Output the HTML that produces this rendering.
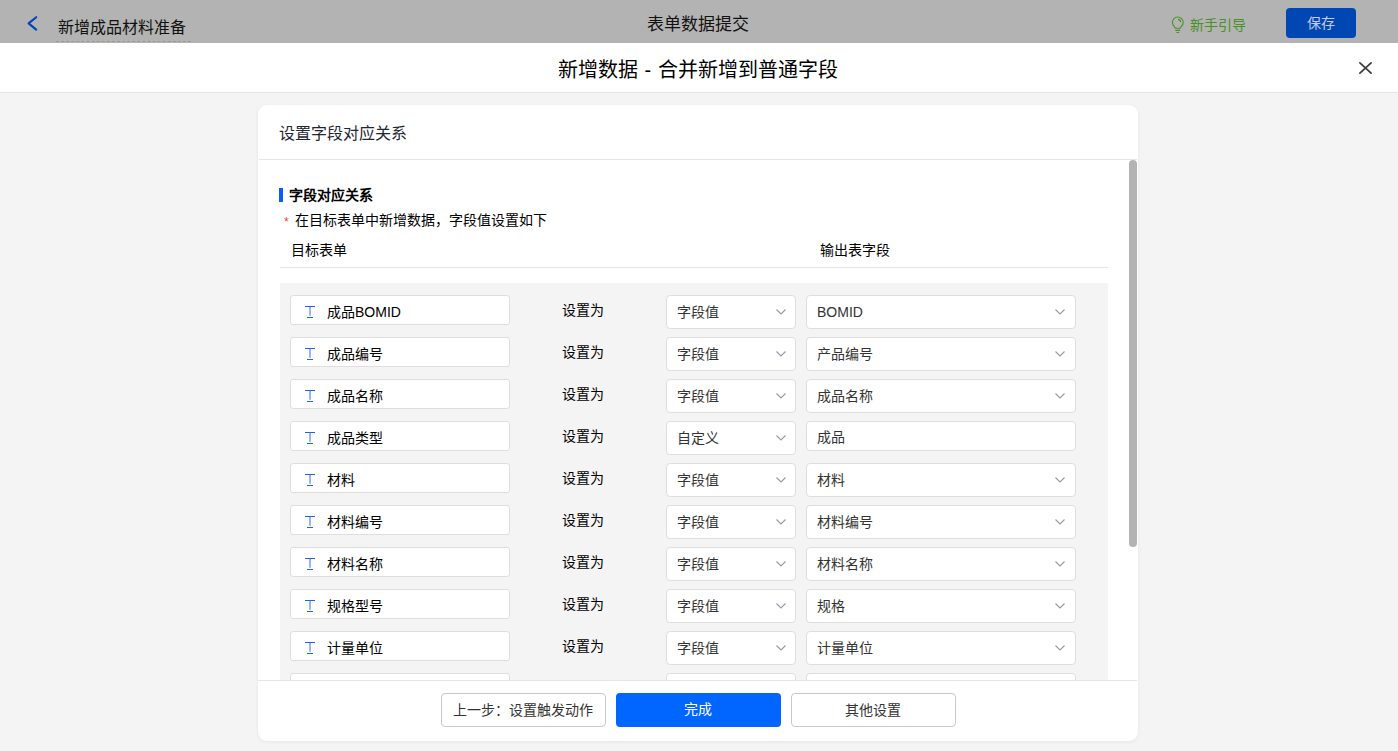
<!DOCTYPE html>
<html lang="zh-CN"><head><meta charset="utf-8">
<style>
*{margin:0;padding:0;box-sizing:border-box}
html,body{width:1398px;height:751px;overflow:hidden}
body{font-family:"Liberation Sans",sans-serif;background:#f4f4f4;position:relative;color:#333}
.abs{position:absolute;white-space:nowrap}
#top{position:absolute;left:0;top:0;width:1398px;height:43px;background:#b3b3b3}
#mhead{position:absolute;left:0;top:43px;width:1398px;height:50px;background:#fff;border-bottom:1px solid #e3e3e3}
#card{position:absolute;left:258px;top:105px;width:880px;height:636px;background:#fff;border-radius:9px;overflow:hidden;box-shadow:0 1px 4px rgba(0,0,0,.06)}
.fbox{position:absolute;left:290px;width:220px;height:30px;background:#fff;border:1px solid #dedede;border-radius:3px}
.sel{position:absolute;height:34px;background:#fff;border:1px solid #dedede;border-radius:4px}
.txt14{font-size:14px;line-height:16px}
.chev{position:absolute;width:10px;height:6px}
.btn{position:absolute;top:693px;height:34px;border-radius:4px;font-size:14px;text-align:center;line-height:32px;padding-right:2px}
</style></head>
<body>
<div id="top"></div>
<svg class="abs" style="left:26px;top:15px" width="14" height="18" viewBox="0 0 14 18"><path d="M10.2 2.2L2.6 8.4L10.2 14.6" fill="none" stroke="#0044b8" stroke-width="2.1" stroke-linecap="round" stroke-linejoin="round"/></svg>
<div class="abs" style="left:58px;top:18px;font-size:16px;line-height:20px;color:#111">新增成品材料准备</div>
<div class="abs" style="left:56px;top:41px;width:135px;border-top:1px dashed #9a9a9a"></div>
<div class="abs" style="left:647px;top:15px;font-size:17px;line-height:20px;color:#111">表单数据提交</div>
<svg class="abs" style="left:1164px;top:10px" width="28" height="28" viewBox="0 0 28 28"><path d="M11.3 18.3C11.1 16.6 8.4 15.6 8.4 12.4A5.4 5.4 0 0 1 19.2 12.4C19.2 15.6 16.5 16.6 16.3 18.3Z" fill="none" stroke="#489224" stroke-width="1.1" stroke-linejoin="round"/><path d="M14.1 9.4A3 3 0 0 1 16.7 12.1" fill="none" stroke="#489224" stroke-width="1.1"/><path d="M11.4 20.4H16.2M12.4 22.5H15.2" stroke="#489224" stroke-width="1.1"/></svg>
<div class="abs" style="left:1190px;top:17px;font-size:14px;line-height:16px;color:#489224">新手引导</div>
<div class="abs" style="left:1286px;top:8px;width:70px;height:30px;background:#0047b3;border-radius:4px;color:#c6cde0;font-size:14px;line-height:30px;text-align:center">保存</div>

<div id="mhead"></div>
<div class="abs" style="left:558px;top:58px;font-size:20px;line-height:24px;color:#000;word-spacing:1px">新增数据 - 合并新增到普通字段</div>
<svg class="abs" style="left:1358px;top:61px" width="15" height="15" viewBox="0 0 15 15"><path d="M1.9 1.8L13.1 12.2M13.1 1.8L1.9 12.2" stroke="#3a3a3a" stroke-width="1.7" stroke-linecap="round"/></svg>

<div id="card"></div>
<div class="abs" style="left:279px;top:124px;font-size:16px;line-height:20px;color:#1f2633">设置字段对应关系</div>
<div class="abs" style="left:259px;top:159px;width:878px;height:1px;background:#e6e6e6"></div>
<div class="abs" style="left:1129px;top:160px;width:8px;height:387px;background:#b3b3b3;border-radius:4px"></div>

<div class="abs" style="left:279px;top:188px;width:4px;height:14px;background:#0d5cf5"></div>
<div class="abs txt14" style="left:289px;top:187px;font-weight:bold;color:#000">字段对应关系</div>
<div class="abs" style="left:284px;top:216px;font-size:12px;line-height:12px;color:#f04040">*</div>
<div class="abs txt14" style="left:295px;top:212px;color:#000">在目标表单中新增数据，字段值设置如下</div>
<div class="abs txt14" style="left:291px;top:242px;color:#000">目标表单</div>
<div class="abs txt14" style="left:820px;top:242px;color:#000">输出表字段</div>
<div class="abs" style="left:280px;top:267px;width:828px;height:1px;background:#e6e6e6"></div>

<div id="rows" class="abs" style="left:0;top:0;width:1398px;height:680px;overflow:hidden">
<div class="abs" style="left:280px;top:283px;width:828px;height:420px;background:#f4f4f4"></div>
<div class="fbox" style="top:295px"></div>
<svg class="abs" style="left:305px;top:306px" width="11" height="13" viewBox="0 0 11 13"><path d="M0 0.5H10M2 11.5H8" fill="none" stroke="#1f63ff" stroke-width="1"/><path d="M5 1V9.8" fill="none" stroke="#4a70ff" stroke-width="1.1"/></svg>
<div class="abs txt14" style="left:327px;top:304px;color:#000">成品BOMID</div>
<div class="abs txt14" style="left:562px;top:302px;color:#000">设置为</div>
<div class="sel" style="left:666px;top:295px;width:130px"></div>
<div class="abs txt14" style="left:677px;top:304px;color:#333">字段值</div>
<svg class="chev" style="left:775.5px;top:309px" width="10" height="6" viewBox="0 0 10 6"><path d="M0.5 0.5L5 5L9.5 0.5" fill="none" stroke="#939aa6" stroke-width="1.1"/></svg>
<div class="sel" style="left:806px;top:295px;width:270px"></div>
<div class="abs txt14" style="left:817px;top:304px;color:#333">BOMID</div>
<svg class="chev" style="left:1055px;top:309px" width="10" height="6" viewBox="0 0 10 6"><path d="M0.5 0.5L5 5L9.5 0.5" fill="none" stroke="#939aa6" stroke-width="1.1"/></svg>
<div class="fbox" style="top:337px"></div>
<svg class="abs" style="left:305px;top:348px" width="11" height="13" viewBox="0 0 11 13"><path d="M0 0.5H10M2 11.5H8" fill="none" stroke="#1f63ff" stroke-width="1"/><path d="M5 1V9.8" fill="none" stroke="#4a70ff" stroke-width="1.1"/></svg>
<div class="abs txt14" style="left:327px;top:346px;color:#000">成品编号</div>
<div class="abs txt14" style="left:562px;top:344px;color:#000">设置为</div>
<div class="sel" style="left:666px;top:337px;width:130px"></div>
<div class="abs txt14" style="left:677px;top:346px;color:#333">字段值</div>
<svg class="chev" style="left:775.5px;top:351px" width="10" height="6" viewBox="0 0 10 6"><path d="M0.5 0.5L5 5L9.5 0.5" fill="none" stroke="#939aa6" stroke-width="1.1"/></svg>
<div class="sel" style="left:806px;top:337px;width:270px"></div>
<div class="abs txt14" style="left:817px;top:346px;color:#333">产品编号</div>
<svg class="chev" style="left:1055px;top:351px" width="10" height="6" viewBox="0 0 10 6"><path d="M0.5 0.5L5 5L9.5 0.5" fill="none" stroke="#939aa6" stroke-width="1.1"/></svg>
<div class="fbox" style="top:379px"></div>
<svg class="abs" style="left:305px;top:390px" width="11" height="13" viewBox="0 0 11 13"><path d="M0 0.5H10M2 11.5H8" fill="none" stroke="#1f63ff" stroke-width="1"/><path d="M5 1V9.8" fill="none" stroke="#4a70ff" stroke-width="1.1"/></svg>
<div class="abs txt14" style="left:327px;top:388px;color:#000">成品名称</div>
<div class="abs txt14" style="left:562px;top:386px;color:#000">设置为</div>
<div class="sel" style="left:666px;top:379px;width:130px"></div>
<div class="abs txt14" style="left:677px;top:388px;color:#333">字段值</div>
<svg class="chev" style="left:775.5px;top:393px" width="10" height="6" viewBox="0 0 10 6"><path d="M0.5 0.5L5 5L9.5 0.5" fill="none" stroke="#939aa6" stroke-width="1.1"/></svg>
<div class="sel" style="left:806px;top:379px;width:270px"></div>
<div class="abs txt14" style="left:817px;top:388px;color:#333">成品名称</div>
<svg class="chev" style="left:1055px;top:393px" width="10" height="6" viewBox="0 0 10 6"><path d="M0.5 0.5L5 5L9.5 0.5" fill="none" stroke="#939aa6" stroke-width="1.1"/></svg>
<div class="fbox" style="top:421px"></div>
<svg class="abs" style="left:305px;top:432px" width="11" height="13" viewBox="0 0 11 13"><path d="M0 0.5H10M2 11.5H8" fill="none" stroke="#1f63ff" stroke-width="1"/><path d="M5 1V9.8" fill="none" stroke="#4a70ff" stroke-width="1.1"/></svg>
<div class="abs txt14" style="left:327px;top:430px;color:#000">成品类型</div>
<div class="abs txt14" style="left:562px;top:428px;color:#000">设置为</div>
<div class="sel" style="left:666px;top:421px;width:130px"></div>
<div class="abs txt14" style="left:677px;top:430px;color:#333">自定义</div>
<svg class="chev" style="left:775.5px;top:435px" width="10" height="6" viewBox="0 0 10 6"><path d="M0.5 0.5L5 5L9.5 0.5" fill="none" stroke="#939aa6" stroke-width="1.1"/></svg>
<div class="sel" style="left:806px;top:421px;width:270px;height:30px"></div>
<div class="abs txt14" style="left:817px;top:429px;color:#333">成品</div>
<div class="fbox" style="top:463px"></div>
<svg class="abs" style="left:305px;top:474px" width="11" height="13" viewBox="0 0 11 13"><path d="M0 0.5H10M2 11.5H8" fill="none" stroke="#1f63ff" stroke-width="1"/><path d="M5 1V9.8" fill="none" stroke="#4a70ff" stroke-width="1.1"/></svg>
<div class="abs txt14" style="left:327px;top:472px;color:#000">材料</div>
<div class="abs txt14" style="left:562px;top:470px;color:#000">设置为</div>
<div class="sel" style="left:666px;top:463px;width:130px"></div>
<div class="abs txt14" style="left:677px;top:472px;color:#333">字段值</div>
<svg class="chev" style="left:775.5px;top:477px" width="10" height="6" viewBox="0 0 10 6"><path d="M0.5 0.5L5 5L9.5 0.5" fill="none" stroke="#939aa6" stroke-width="1.1"/></svg>
<div class="sel" style="left:806px;top:463px;width:270px"></div>
<div class="abs txt14" style="left:817px;top:472px;color:#333">材料</div>
<svg class="chev" style="left:1055px;top:477px" width="10" height="6" viewBox="0 0 10 6"><path d="M0.5 0.5L5 5L9.5 0.5" fill="none" stroke="#939aa6" stroke-width="1.1"/></svg>
<div class="fbox" style="top:505px"></div>
<svg class="abs" style="left:305px;top:516px" width="11" height="13" viewBox="0 0 11 13"><path d="M0 0.5H10M2 11.5H8" fill="none" stroke="#1f63ff" stroke-width="1"/><path d="M5 1V9.8" fill="none" stroke="#4a70ff" stroke-width="1.1"/></svg>
<div class="abs txt14" style="left:327px;top:514px;color:#000">材料编号</div>
<div class="abs txt14" style="left:562px;top:512px;color:#000">设置为</div>
<div class="sel" style="left:666px;top:505px;width:130px"></div>
<div class="abs txt14" style="left:677px;top:514px;color:#333">字段值</div>
<svg class="chev" style="left:775.5px;top:519px" width="10" height="6" viewBox="0 0 10 6"><path d="M0.5 0.5L5 5L9.5 0.5" fill="none" stroke="#939aa6" stroke-width="1.1"/></svg>
<div class="sel" style="left:806px;top:505px;width:270px"></div>
<div class="abs txt14" style="left:817px;top:514px;color:#333">材料编号</div>
<svg class="chev" style="left:1055px;top:519px" width="10" height="6" viewBox="0 0 10 6"><path d="M0.5 0.5L5 5L9.5 0.5" fill="none" stroke="#939aa6" stroke-width="1.1"/></svg>
<div class="fbox" style="top:547px"></div>
<svg class="abs" style="left:305px;top:558px" width="11" height="13" viewBox="0 0 11 13"><path d="M0 0.5H10M2 11.5H8" fill="none" stroke="#1f63ff" stroke-width="1"/><path d="M5 1V9.8" fill="none" stroke="#4a70ff" stroke-width="1.1"/></svg>
<div class="abs txt14" style="left:327px;top:556px;color:#000">材料名称</div>
<div class="abs txt14" style="left:562px;top:554px;color:#000">设置为</div>
<div class="sel" style="left:666px;top:547px;width:130px"></div>
<div class="abs txt14" style="left:677px;top:556px;color:#333">字段值</div>
<svg class="chev" style="left:775.5px;top:561px" width="10" height="6" viewBox="0 0 10 6"><path d="M0.5 0.5L5 5L9.5 0.5" fill="none" stroke="#939aa6" stroke-width="1.1"/></svg>
<div class="sel" style="left:806px;top:547px;width:270px"></div>
<div class="abs txt14" style="left:817px;top:556px;color:#333">材料名称</div>
<svg class="chev" style="left:1055px;top:561px" width="10" height="6" viewBox="0 0 10 6"><path d="M0.5 0.5L5 5L9.5 0.5" fill="none" stroke="#939aa6" stroke-width="1.1"/></svg>
<div class="fbox" style="top:589px"></div>
<svg class="abs" style="left:305px;top:600px" width="11" height="13" viewBox="0 0 11 13"><path d="M0 0.5H10M2 11.5H8" fill="none" stroke="#1f63ff" stroke-width="1"/><path d="M5 1V9.8" fill="none" stroke="#4a70ff" stroke-width="1.1"/></svg>
<div class="abs txt14" style="left:327px;top:598px;color:#000">规格型号</div>
<div class="abs txt14" style="left:562px;top:596px;color:#000">设置为</div>
<div class="sel" style="left:666px;top:589px;width:130px"></div>
<div class="abs txt14" style="left:677px;top:598px;color:#333">字段值</div>
<svg class="chev" style="left:775.5px;top:603px" width="10" height="6" viewBox="0 0 10 6"><path d="M0.5 0.5L5 5L9.5 0.5" fill="none" stroke="#939aa6" stroke-width="1.1"/></svg>
<div class="sel" style="left:806px;top:589px;width:270px"></div>
<div class="abs txt14" style="left:817px;top:598px;color:#333">规格</div>
<svg class="chev" style="left:1055px;top:603px" width="10" height="6" viewBox="0 0 10 6"><path d="M0.5 0.5L5 5L9.5 0.5" fill="none" stroke="#939aa6" stroke-width="1.1"/></svg>
<div class="fbox" style="top:631px"></div>
<svg class="abs" style="left:305px;top:642px" width="11" height="13" viewBox="0 0 11 13"><path d="M0 0.5H10M2 11.5H8" fill="none" stroke="#1f63ff" stroke-width="1"/><path d="M5 1V9.8" fill="none" stroke="#4a70ff" stroke-width="1.1"/></svg>
<div class="abs txt14" style="left:327px;top:640px;color:#000">计量单位</div>
<div class="abs txt14" style="left:562px;top:638px;color:#000">设置为</div>
<div class="sel" style="left:666px;top:631px;width:130px"></div>
<div class="abs txt14" style="left:677px;top:640px;color:#333">字段值</div>
<svg class="chev" style="left:775.5px;top:645px" width="10" height="6" viewBox="0 0 10 6"><path d="M0.5 0.5L5 5L9.5 0.5" fill="none" stroke="#939aa6" stroke-width="1.1"/></svg>
<div class="sel" style="left:806px;top:631px;width:270px"></div>
<div class="abs txt14" style="left:817px;top:640px;color:#333">计量单位</div>
<svg class="chev" style="left:1055px;top:645px" width="10" height="6" viewBox="0 0 10 6"><path d="M0.5 0.5L5 5L9.5 0.5" fill="none" stroke="#939aa6" stroke-width="1.1"/></svg>
<div class="fbox" style="top:673px"></div>
<svg class="abs" style="left:305px;top:684px" width="11" height="13" viewBox="0 0 11 13"><path d="M0 0.5H10M2 11.5H8" fill="none" stroke="#1f63ff" stroke-width="1"/><path d="M5 1V9.8" fill="none" stroke="#4a70ff" stroke-width="1.1"/></svg>
<div class="abs txt14" style="left:327px;top:682px;color:#000"></div>
<div class="sel" style="left:666px;top:673px;width:130px"></div>
<div class="abs txt14" style="left:677px;top:682px;color:#333"></div>
<svg class="chev" style="left:775.5px;top:687px" width="10" height="6" viewBox="0 0 10 6"><path d="M0.5 0.5L5 5L9.5 0.5" fill="none" stroke="#939aa6" stroke-width="1.1"/></svg>
<div class="sel" style="left:806px;top:673px;width:270px"></div>
<div class="abs txt14" style="left:817px;top:682px;color:#333"></div>
<svg class="chev" style="left:1055px;top:687px" width="10" height="6" viewBox="0 0 10 6"><path d="M0.5 0.5L5 5L9.5 0.5" fill="none" stroke="#939aa6" stroke-width="1.1"/></svg>
</div>
<div class="abs" style="left:258px;top:680px;width:879px;height:1px;background:#e6e6e6"></div>

<div class="btn" style="left:441px;width:165px;border:1px solid #c9c9c9;background:#fff;color:#333">上一步：设置触发动作</div>
<div class="btn" style="left:616px;width:165px;background:#0066ff;color:#fff;padding-right:2px">完成</div>
<div class="btn" style="left:791px;width:165px;border:1px solid #c9c9c9;background:#fff;color:#333">其他设置</div>
</body></html>
